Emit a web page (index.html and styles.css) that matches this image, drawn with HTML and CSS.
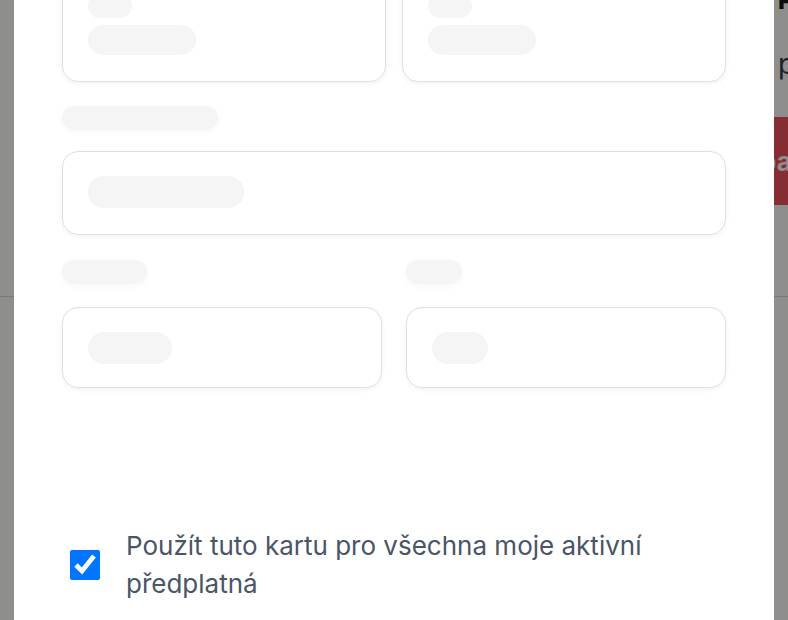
FILE: index.html
```html
<!DOCTYPE html>
<html lang="cs">
<head>
  <meta charset="UTF-8" />
  <meta name="viewport" content="width=device-width, initial-scale=1.0" />
  <title>Platební karta</title>
  <link rel="stylesheet" href="styles.css">
</head>
<body>
  <div class="page">
    <div class="page-top">
      <div class="page-main"></div>
      <aside class="summary">
        <h2>Platba</h2>
        <p>předplatné</p>
        <button class="pay">Platba kartou</button>
      </aside>
    </div>
    <div class="page-rest"></div>
  </div>

  <div class="backdrop"></div>

  <div class="modal">
    <div class="modal-body">
      <div class="card-row">
        <div class="card">
          <div class="sk sk-sm"></div>
          <div class="sk sk-md"></div>
        </div>
        <div class="card">
          <div class="sk sk-sm"></div>
          <div class="sk sk-md"></div>
        </div>
      </div>

      <div class="sk label label-long"></div>
      <div class="field field-wide">
        <div class="sk sk-field" style="width:156px"></div>
      </div>

      <div class="field-row">
        <div class="field-col">
          <div class="sk label" style="width:85px"></div>
          <div class="field">
            <div class="sk sk-field" style="width:84px"></div>
          </div>
        </div>
        <div class="field-col">
          <div class="sk label" style="width:56px"></div>
          <div class="field">
            <div class="sk sk-field" style="width:56px"></div>
          </div>
        </div>
      </div>

      <label class="use-all">
        <input type="checkbox" checked>
        <span>Použít tuto kartu pro všechna moje aktivní předplatná</span>
      </label>
    </div>
  </div>
</body>
</html>
```

FILE: styles.css
```css
html, body {
  margin:0;
  height:100%;
}
body {
  font-family:Inter, "Noto Sans", sans-serif;
  background:#fff;
  overflow:hidden;
}

/* page behind the dialog */
.page-top {
  display:grid;
  grid-template-columns:776px 1fr;
  height:296px;
  border-bottom:1px solid #d8d8d8;
}
.summary {
  white-space:nowrap;
}
.summary h2 {
  margin:-14px 0 0 2px;
  font-size:24px;
  font-weight:800;
  color:#111;
}
.summary p {
  margin:32px 0 0 2px;
  font-size:28px;
  color:#2d3748;
}
.pay {
  display:block;
  margin:36px 0 0 -110px;
  width:260px;
  height:88px;
  border:0;
  background:#f04a5a;
  color:#fff;
  font-family:inherit;
  font-size:26px;
  font-weight:700;
}

.backdrop {
  position:fixed;
  inset:0;
  background:rgba(9,8,6,0.46);
}

/* dialog */
.modal {
  position:fixed;
  top:0;
  bottom:0;
  left:14px;
  width:760px;
  background:#fff;
  overflow:hidden;
}
.modal-body {
  margin-top:-31px;
  padding:0 48px;
}
.sk {
  background:#f5f5f5;
  border-radius:999px;
}
.card-row {
  display:grid;
  grid-template-columns:1fr 1fr;
  gap:16px;
}
.card {
  border:1px solid #e0e0e0;
  border-radius:16px;
  padding:24px 25px 26px;
  box-shadow:0 2px 5px rgba(0,0,0,0.05);
}
.sk-sm {
  width:44px;
  height:24px;
}
.sk-md {
  width:108px;
  height:30px;
  margin-top:7px;
}
.label {
  height:24px;
  box-shadow:0 2px 8px rgba(0,0,0,0.03);
}
.label-long {
  width:156px;
  margin-top:24px;
}
.field {
  border:1px solid #e0e0e0;
  border-radius:16px;
  padding:24px 25px 23px;
  margin-top:21px;
  box-shadow:0 2px 5px rgba(0,0,0,0.05);
}
.field-wide {
  padding-bottom:26px;
}
.sk-field {
  height:32px;
}
.field-row {
  display:grid;
  grid-template-columns:1fr 1fr;
  gap:24px;
  margin-top:25px;
}
.field-row .field {
  margin-top:23px;
}

.use-all {
  display:flex;
  align-items:center;
  gap:26px;
  margin-top:139px;
  padding-left:8px;
  font-size:26px;
  line-height:38px;
  color:#4a5568;
}
.use-all input {
  flex:none;
  width:30px;
  height:30px;
  margin:0;
}
```
